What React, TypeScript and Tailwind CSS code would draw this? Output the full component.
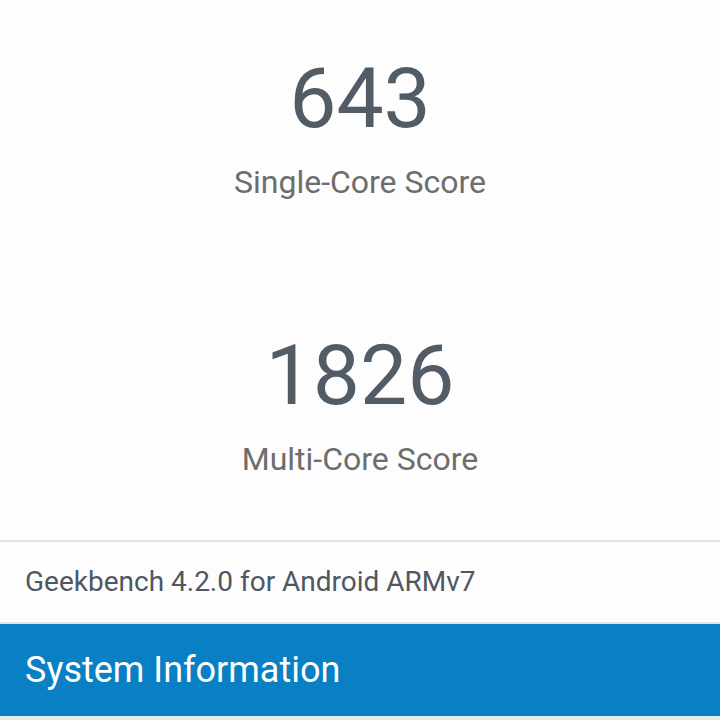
const scores = [
  { value: "643", label: "Single-Core Score" },
  { value: "1826", label: "Multi-Core Score" },
];

function ScoreBlock({ value, label }: { value: string; label: string }) {
  return (
    <div className="flex flex-col items-center gap-[25px]">
      <div className="text-[84px] leading-none text-[#525c67]">{value}</div>
      <div className="text-[32px] leading-none text-[#6d6d6d]">{label}</div>
    </div>
  );
}

export default function App() {
  return (
    <div
      className="flex h-[720px] w-[720px] flex-col overflow-hidden bg-[#fdfdfd]"
      style={{ fontFamily: "Roboto, 'Noto Sans', sans-serif" }}
    >
      {/* score cards */}
      <div className="flex flex-col items-center gap-[136px] pt-[57px] pb-[65px]">
        {scores.map((s) => (
          <ScoreBlock key={s.label} value={s.value} label={s.label} />
        ))}
      </div>

      <div className="border-t-2 border-[#e2e2e2]" />
      <div className="flex h-[80px] items-center px-[25px] text-[28px] text-[#4f5862]">
        Geekbench 4.2.0 for Android ARMv7
      </div>
      <div className="border-t-2 border-[#e2e2e2]" />

      {/* section header */}
      <div className="flex h-[92px] items-center bg-[#0880c3] px-[25px] text-[36px] text-white">
        System Information
      </div>
      <div className="flex-1 bg-[#e9e9e9]" />
    </div>
  );
}
